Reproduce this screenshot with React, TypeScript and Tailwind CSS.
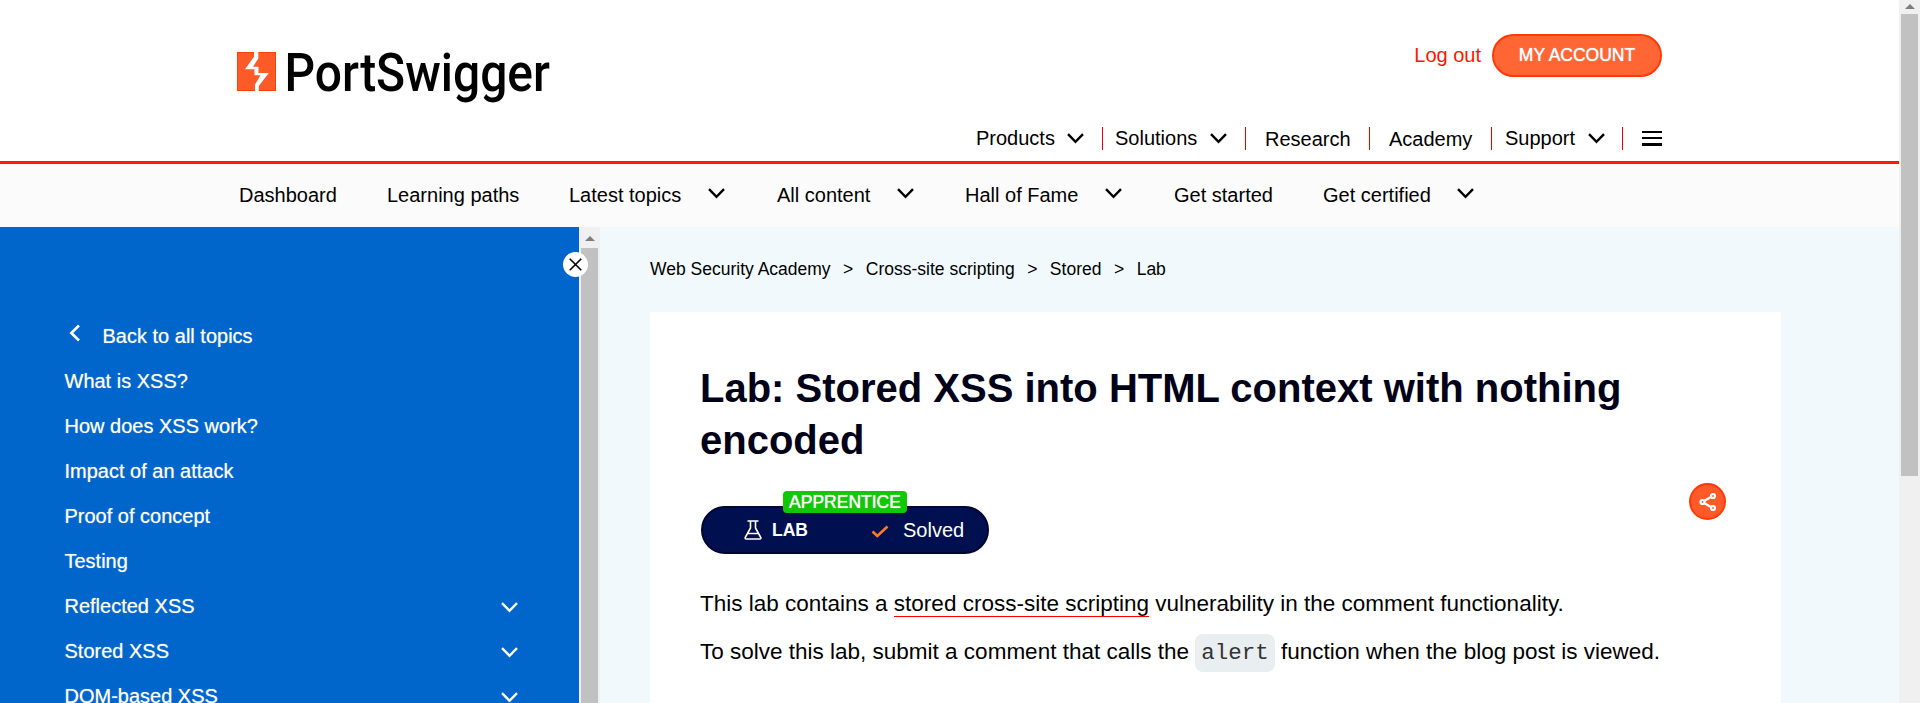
import React from "react";

const Chevron = ({ className = "" }: { className?: string }) => (
  <svg viewBox="0 0 17 11" className={`h-[11px] w-[17px] shrink-0 ${className}`} fill="none" stroke="currentColor" strokeWidth="2.4">
    <path d="M1 1.200 8.500 8.800l7.500-7.600" />
  </svg>
);

const ArrowUp = () => (
  <svg viewBox="0 0 10 5" className="h-[5px] w-[10px]" fill="#7d7d7d">
    <path d="M5 0 10 5H0Z" />
  </svg>
);

const Logo = () => (
  <svg viewBox="0 0 330 80" className="h-[80px] w-[330px]" role="img">
    <rect x="0.500" y="8.500" width="38" height="38" fill="#ff5a28" stroke="#ff3f0c" strokeWidth="1" />
    <path
      fill="#fff"
      d="M17 7.500V12.700L8 25.300H17.500V31.300H23.500L18 40.500V47.500H21.800V42L31.800 29H21.500V22.800H16L21.300 14.500V7.500Z"
    />
    <text x="47.500" y="47" fontSize="54.500" textLength="265.500" lengthAdjust="spacingAndGlyphs" className="fill-black font-[Roboto,sans-serif] font-medium">
      PortSwigger
    </text>
  </svg>
);

const topNav = [
  { label: "Products", chevron: true, cls: "w-[126px]" },
  { label: "Solutions", chevron: true, cls: "w-[143px] border-l pl-[12px]" },
  { label: "Research", chevron: false, cls: "w-[124px] border-l pl-[19px] pt-[1px]" },
  { label: "Academy", chevron: false, cls: "w-[122px] border-l pl-[19px] pt-[1px]" },
  { label: "Support", chevron: true, cls: "w-[131px] border-l pl-[13px]" },
];

const subNav = [
  { label: "Dashboard", chevron: false, cls: "w-[148px]" },
  { label: "Learning paths", chevron: false, cls: "w-[182px]" },
  { label: "Latest topics", chevron: true, cls: "w-[208px] pr-[52px]" },
  { label: "All content", chevron: true, cls: "w-[188px] pr-[51px]" },
  { label: "Hall of Fame", chevron: true, cls: "w-[209px] pr-[52px]" },
  { label: "Get started", chevron: false, cls: "w-[149px]" },
  { label: "Get certified", chevron: true, cls: "w-[151px]" },
];

const topics = [
  { label: "What is XSS?" },
  { label: "How does XSS work?" },
  { label: "Impact of an attack" },
  { label: "Proof of concept" },
  { label: "Testing" },
  { label: "Reflected XSS", open: true },
  { label: "Stored XSS", open: true },
  { label: "DOM-based XSS", open: true },
];

const crumbs = ["Web Security Academy", "Cross-site scripting", "Stored", "Lab"];

function Header() {
  return (
    <header className="flex h-[164px] shrink-0 justify-between border-b-[3px] border-[#ff1a00] bg-white pl-[237px] pr-[237px]">
      <div className="pt-[44px]">
        <Logo />
      </div>
      <div className="flex flex-col items-end">
        <div className="flex items-center gap-[11px] pt-[34px]">
          <a className="-mt-[2px] text-xl leading-6 text-[#ff1500]">Log out</a>
          <button className="h-[43px] w-[170px] rounded-full border-2 border-[#ff3a08] bg-[#ff6633] text-[17.500px] leading-none text-white [text-shadow:0_0_1px_#fff]">
            MY ACCOUNT
          </button>
        </div>
        <nav className="mt-[50px] flex h-[22px] items-start text-xl leading-[22px]">
          {topNav.map((item) => (
            <a key={item.label} className={`flex h-[23px] border-[#f00000] ${item.cls}`}>
              {item.label}
              {item.chevron && <Chevron className="ml-[12.500px] mt-[6px]" />}
            </a>
          ))}
          <button className="flex h-[23px] w-[40px] flex-col items-end gap-[4px] border-l border-[#f00000] pt-[4px]">
            <span className="h-[2px] w-[20px] bg-black" />
            <span className="h-[2px] w-[20px] bg-black" />
            <span className="h-[3px] w-[20px] bg-black" />
          </button>
        </nav>
      </div>
    </header>
  );
}

function Sidebar() {
  return (
    <aside className="flex w-[600px] shrink-0">
      <div className="relative w-[579px] bg-[#0066cc] pl-[64.500px] pt-[87px] text-xl leading-[45px] text-white [text-shadow:0_0_1px_#ffffff99]">
        <button className="absolute -right-[9px] top-[25px] z-10 flex size-[25px] items-center justify-center rounded-full bg-white text-black">
          <svg viewBox="0 0 13 13" className="size-[13px]" fill="none" stroke="currentColor" strokeWidth="1.600">
            <path d="M.7.7 12.300 12.300M12.300.7.7 12.300" />
          </svg>
        </button>
        <a className="flex h-[45px]">
          <svg viewBox="0 0 11 18" className="mt-[10px] ml-[4px] h-[18px] w-[11px]" fill="none" stroke="currentColor" strokeWidth="2.600">
            <path d="M10 1.500 2.300 9 10 16.500" />
          </svg>
          <span className="ml-[23px]">Back to all topics</span>
        </a>
        {topics.map((t) => (
          <a key={t.label} className="flex h-[45px] justify-between pr-[61.500px]">
            {t.label}
            {t.open && <Chevron className="mt-[17.500px]" />}
          </a>
        ))}
      </div>
      <div className="flex w-[21px] flex-col items-center bg-[#f0f0f0]">
        <div className="flex h-[21px] items-center pt-[2px]">
          <ArrowUp />
        </div>
        <div className="w-[17px] flex-1 bg-[#c1c1c1]" />
      </div>
    </aside>
  );
}

function LabStatus() {
  return (
    <div className="relative flex h-[48px] w-[288px] items-center rounded-full border-2 border-[#00062e] bg-[#000f50] text-white">
      <span className="absolute left-[80px] -top-[17px] flex h-[22px] w-[124px] items-center justify-center rounded-[4px] bg-[#12c706] pt-[1px] text-[17.500px] leading-none [text-shadow:0_0_1px_#fff]">
        APPRENTICE
      </span>
      <svg viewBox="0 0 18 20" className="ml-[41px] h-[20px] w-[18px]" fill="none" stroke="currentColor" strokeWidth="1.600">
        <path d="M3.500 1H14.500M6.500 1V8L1.200 17.500Q.8 19 2.200 19H15.800Q17.200 19 16.800 17.500L11.500 8V1M4 13.500H14" />
      </svg>
      <b className="ml-[10px] w-[99px] text-[17.500px] leading-6">LAB</b>
      <svg viewBox="0 0 18 13" className="mt-[3px] h-[13px] w-[18px]" fill="none" stroke="#ff7a26" strokeWidth="2.600">
        <path d="M1.500 6.500 6.300 11 16.500 1.500" />
      </svg>
      <span className="ml-[14px] text-xl leading-6">Solved</span>
    </div>
  );
}

function Main() {
  return (
    <main className="flex-1 bg-[#f1f9fc] pl-[50px] pt-[30px]">
      <div className="flex h-[24px] items-center text-[17.500px] leading-6">
        {crumbs.map((c, i) => (
          <React.Fragment key={c}>
            {i > 0 && <span className="mx-[12.500px]">&gt;</span>}
            <a>{c}</a>
          </React.Fragment>
        ))}
      </div>
      <article className="mt-[31px] flex h-[391px] w-[1131px] flex-col bg-white pl-[50px] pr-[55px] pt-[50px] text-[22.500px]">
        <h1 className="w-[1000px] text-[40px] font-bold leading-[52px] text-[#000018]">
          Lab: Stored XSS into HTML context with nothing encoded
        </h1>
        <div className="mt-[25px] flex h-[63px] items-end justify-between pl-[1px]">
          <LabStatus />
          <button className="mb-[34px] flex size-[37px] items-center justify-center rounded-full border-2 border-[#ff3a08] bg-[#ff5a28]">
            <svg viewBox="0 0 18 20" className="h-[20px] w-[18px]" fill="none" stroke="#fff" strokeWidth="2.200">
              <path d="M5 9 12 5M5 11l7 4" />
              <circle cx="3.500" cy="10" r="2" />
              <circle cx="14" cy="4" r="2" />
              <circle cx="14" cy="16" r="2" />
            </svg>
          </button>
        </div>
        <p className="mt-[35px] whitespace-nowrap leading-[30px]">
          This lab contains a <a className="border-b border-[#f00]">stored cross-site scripting</a> vulnerability in the comment functionality.
        </p>
        <p className="mt-[18px] whitespace-nowrap leading-[30px]">
          To solve this lab, submit a comment that calls the{" "}
          <code className="rounded-lg bg-[#e9eef1] px-[6px] py-[6px] font-['Liberation_Mono',monospace] text-[22.500px] text-[#333]">alert</code> function when
          the blog post is viewed.
        </p>
      </article>
    </main>
  );
}

export default function App() {
  return (
    <div className="flex h-[703px] w-[1920px] overflow-hidden bg-white font-['Liberation_Sans',Arial,sans-serif] text-black">
      <div className="flex w-[1899px] flex-col">
        <Header />
        <nav className="flex h-[63px] shrink-0 items-center bg-[#fbfbfb] pb-[1px] pl-[239px] text-xl leading-6">
          {subNav.map((item) => (
            <a key={item.label} className={`flex items-center justify-between ${item.cls}`}>
              {item.label}
              {item.chevron && <Chevron className="-mt-[4px]" />}
            </a>
          ))}
        </nav>
        <div className="flex h-[476px] overflow-hidden">
          <Sidebar />
          <Main />
        </div>
      </div>
      <div className="flex w-[21px] flex-col items-center bg-[#f0f0f0]">
        <div className="flex h-[14px] items-start pt-[4px]">
          <ArrowUp />
        </div>
        <div className="h-[462px] w-[17px] bg-[#c1c1c1]" />
      </div>
    </div>
  );
}
